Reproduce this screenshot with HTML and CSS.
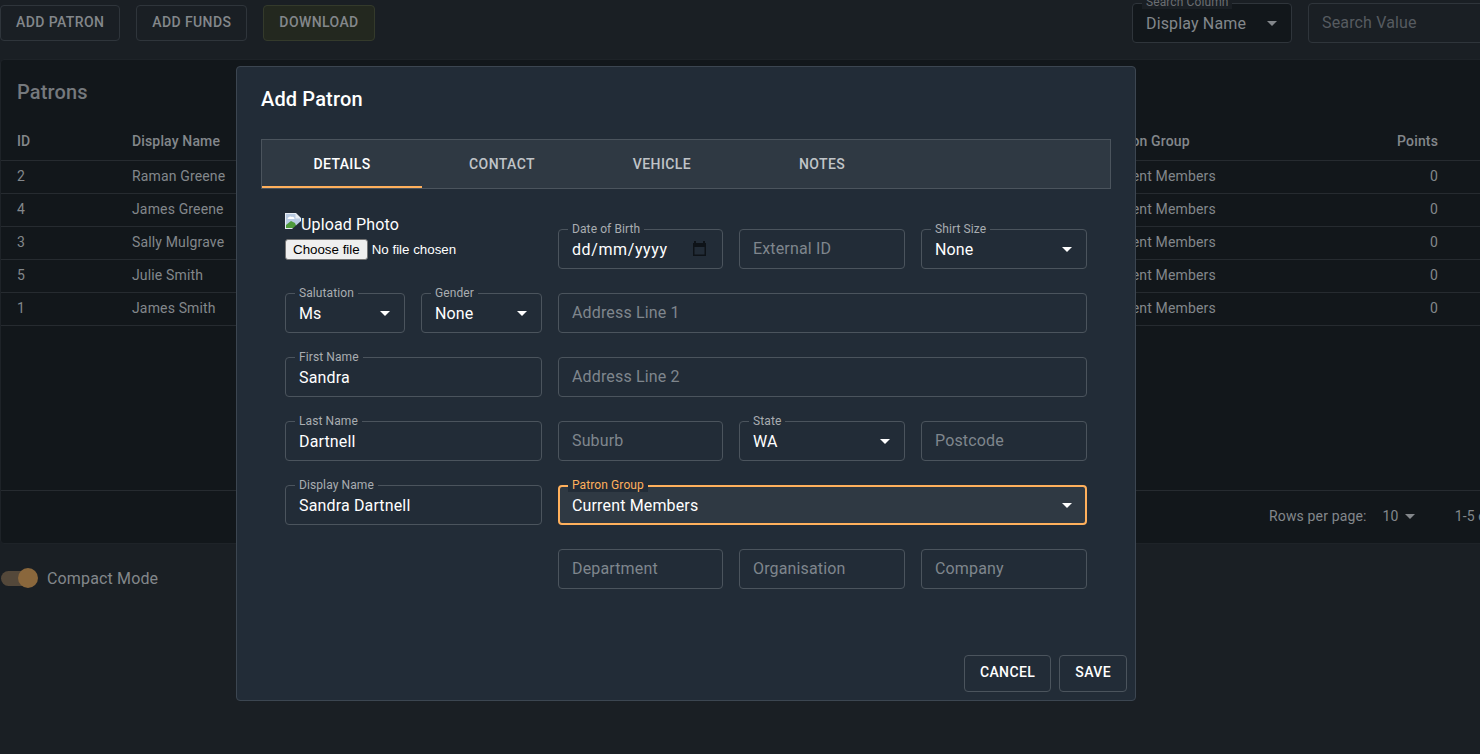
FILE: index.html
```html
<!DOCTYPE html>
<html lang="en">
<head>
<meta charset="utf-8">
<title>Patrons</title>
<link rel="stylesheet" href="styles.css">
</head>
<body>
<div class="page">
  <div class="toolbar">
    <button class="tbtn">Add Patron</button>
    <button class="tbtn">Add Funds</button>
    <button class="tbtn tbtn-green">Download</button>
    <div class="search">
      <div class="sfield sfield-col">
        <span class="slabel">Search Column</span>
        <span>Display Name</span>
        <svg class="caret caret-dim" viewBox="0 0 24 24"><path d="M7 10l5 5 5-5z"/></svg>
      </div>
      <div class="sfield sfield-val"><span class="splace">Search Value</span></div>
    </div>
  </div>

  <section class="panel">
    <h2 class="panel-title">Patrons</h2>
    <div class="trow thead"><span>ID</span><span>Display Name</span><span>Patron Group</span><span class="num">Points</span></div>
    <div class="trow"><span>2</span><span>Raman Greene</span><span>Current Members</span><span class="num">0</span></div>
    <div class="trow"><span>4</span><span>James Greene</span><span>Current Members</span><span class="num">0</span></div>
    <div class="trow"><span>3</span><span>Sally Mulgrave</span><span>Current Members</span><span class="num">0</span></div>
    <div class="trow"><span>5</span><span>Julie Smith</span><span>Current Members</span><span class="num">0</span></div>
    <div class="trow"><span>1</span><span>James Smith</span><span>Current Members</span><span class="num">0</span></div>
    <div class="tspace"></div>
    <div class="tfoot">
      <span>Rows per page:</span>
      <span class="rpp">10</span>
      <svg class="caret-small" viewBox="0 0 24 24"><path d="M7 10l5 5 5-5z"/></svg>
      <span class="range">1-5 of 5</span>
    </div>
  </section>

  <div class="compact">
    <span class="switch"><span class="thumb"></span></span>
    <span>Compact Mode</span>
  </div>
</div>

<div class="modal">
  <h2 class="modal-title">Add Patron</h2>
  <div class="tabs">
    <div class="tab tab-active">Details</div>
    <div class="tab">Contact</div>
    <div class="tab">Vehicle</div>
    <div class="tab">Notes</div>
  </div>

  <div class="form">
    <div class="upload">
      <div class="photo">
        <svg class="broken" viewBox="0 0 16 16">
          <path d="M0 0h11l5 5v11H0z" fill="#e8edf3"/>
          <path d="M1 1h9.500v4.500H15V15H1z" fill="#b9cbe2"/>
          <path d="M2.500 6c.5-2 2.500-3 4-2 1.500-.5 3 .5 3 2z" fill="#fff"/>
          <path d="M1 15v-3l5-4 4 2 2 5z" fill="#4e9a3b"/>
          <path d="M7 16l9-8v8z" fill="#222c37"/>
        </svg><span>Upload Photo</span>
      </div>
      <div class="file"><button class="file-btn">Choose file</button><span>No file chosen</span></div>
    </div>
    <div class="cols-3">
      <div class="field"><span class="flabel">Date of Birth</span><span class="date">dd/mm/yyyy</span>
        <svg class="cal" viewBox="0 0 13 15"><path fill-rule="evenodd" d="M1 0h2v2h7V0h2v2h1v13H0V2h1zM1.500 6v7.500h10V6z" fill="#0e1318"/></svg>
      </div>
      <div class="field"><input class="finput" placeholder="External ID"></div>
      <div class="field"><span class="flabel">Shirt Size</span><span class="fval">None</span><svg class="caret" viewBox="0 0 24 24"><path d="M7 10l5 5 5-5z"/></svg></div>
    </div>

    <div class="cols-2">
      <div class="field"><span class="flabel">Salutation</span><span class="fval">Ms</span><svg class="caret" viewBox="0 0 24 24"><path d="M7 10l5 5 5-5z"/></svg></div>
      <div class="field"><span class="flabel">Gender</span><span class="fval">None</span><svg class="caret" viewBox="0 0 24 24"><path d="M7 10l5 5 5-5z"/></svg></div>
    </div>
    <div class="field"><input class="finput" placeholder="Address Line 1"></div>

    <div class="field"><span class="flabel">First Name</span><input class="finput fill" value="Sandra"></div>
    <div class="field"><input class="finput" placeholder="Address Line 2"></div>

    <div class="field"><span class="flabel">Last Name</span><input class="finput fill" value="Dartnell"></div>
    <div class="cols-3">
      <div class="field"><input class="finput" placeholder="Suburb"></div>
      <div class="field"><span class="flabel">State</span><span class="fval">WA</span><svg class="caret" viewBox="0 0 24 24"><path d="M7 10l5 5 5-5z"/></svg></div>
      <div class="field"><input class="finput" placeholder="Postcode"></div>
    </div>

    <div class="field"><span class="flabel">Display Name</span><input class="finput fill" value="Sandra Dartnell"></div>
    <div class="field field-focus"><span class="flabel">Patron Group</span><span class="fval">Current Members</span><svg class="caret" viewBox="0 0 24 24"><path d="M7 10l5 5 5-5z"/></svg></div>

    <div></div>
    <div class="cols-3">
      <div class="field"><input class="finput" placeholder="Department"></div>
      <div class="field"><input class="finput" placeholder="Organisation"></div>
      <div class="field"><input class="finput" placeholder="Company"></div>
    </div>
  </div>

  <div class="actions">
    <button class="mbtn">Cancel</button>
    <button class="mbtn">Save</button>
  </div>
</div>
</body>
</html>
```
FILE: styles.css
```css
* { box-sizing: border-box; }
html, body { margin: 0; height: 100%; overflow: hidden; }
body { background: #1a1f24; font-family: Roboto, "Liberation Sans", sans-serif; color: #83878b; position: relative; letter-spacing: .15px; }

.page { width: 1620px; }

.toolbar { display: flex; align-items: flex-start; gap: 16px; padding: 5px 12px 0 0; height: 59px; }
.tbtn { height: 36px; padding: 0 15px 2px; background: transparent; border: 1px solid #2f353b; border-radius: 4px; color: #83878b; font: 500 14px/1 Roboto, sans-serif; letter-spacing: .4px; text-transform: uppercase; white-space: nowrap; }
.tbtn-green { background: #23281f; border-color: #343a2b; }

.search { display: flex; gap: 16px; margin-left: auto; margin-top: -2px; }
.sfield { position: relative; height: 40px; border: 1px solid #2f353b; border-radius: 4px; display: flex; align-items: center; padding: 0 13px; font-size: 16px; }
.sfield-col { width: 160px; background: #12171b; }
.sfield-val { width: 300px; }
.splace { color: #565b60; margin-top: -2px; }
.slabel { position: absolute; left: 9px; top: -9px; font-size: 12px; line-height: 14px; padding: 0 4px; background: #1a1f24; color: #6a6e72; letter-spacing: .1px; }

.caret { position: absolute; right: 7px; top: 50%; width: 24px; height: 24px; margin-top: -12px; fill: #fff; }
.caret-dim { fill: #83878b; }

.panel { background: #12171b; border: 1px solid #1e2328; border-radius: 4px; height: 485px; display: flex; flex-direction: column; }
.panel-title { margin: 0; padding: 20px 16px 0; height: 65px; font: 500 20px/24px Roboto, sans-serif; color: #75797d; }
.trow { display: grid; grid-template-columns: 115px 973px 202px 131px; padding: 0 0 2px 16px; height: 33px; border-bottom: 1px solid #262b30; align-items: center; font-size: 14px; }
.thead { height: 36px; padding-bottom: 4px; font-weight: 500; }
.num { text-align: right; }
.tspace { flex: 1; border-bottom: 1px solid #262b30; }
.tfoot { height: 52px; display: flex; align-items: center; padding: 0 0 2px 1268px; font-size: 14px; }
.rpp { margin-left: 16px; }
.caret-small { width: 24px; height: 24px; margin-left: -1px; fill: #83878b; }
.range { margin-left: 33px; }

.compact { display: flex; align-items: center; gap: 9px; margin-top: 24px; padding-left: 1px; font-size: 16px; height: 20px; }
.switch { position: relative; width: 34px; height: 15px; margin-right: 3px; border-radius: 8px; background: #54483a; display: block; }
.thumb { position: absolute; right: -3px; top: -3px; width: 20px; height: 20px; border-radius: 50%; background: #8a673c; }

.modal { position: absolute; left: 236px; top: 66px; width: 900px; height: 635px; background: #222c37; border: 1px solid #3c4651; border-radius: 4px; padding: 20px 24px 8px; display: flex; flex-direction: column; color: #fff; }
.modal-title { margin: 0; font: 500 20px/24px Roboto, sans-serif; color: #fff; letter-spacing: .15px; }

.tabs { display: flex; margin-top: 28px; height: 50px; background: #2f3943; border: 1px solid #4b545d; }
.tab { width: 160px; display: flex; align-items: center; justify-content: center; font-size: 14px; font-weight: 500; text-transform: uppercase; letter-spacing: .4px; color: #c0c4c8; padding-bottom: 1px; }
.tab-active { color: #fff; border-bottom: 2px solid #ffb05c; padding: 1px 0 0; }

.form { display: grid; grid-template-columns: 257px 529px; grid-auto-rows: 40px; gap: 24px 16px; margin: 40px 24px 0; }
.cols-3 { display: grid; grid-template-columns: 165px 166px 166px; gap: 16px; }
.cols-2 { display: grid; grid-template-columns: 120px 121px; gap: 16px; }

.upload { margin-top: -16px; height: 48px; }
.photo { display: flex; font-size: 16px; height: 23px; align-items: flex-start; color: #fff; line-height: 23px; }
.broken { width: 16px; height: 16px; flex: none; }
.file { display: flex; align-items: center; margin-top: 3px; color: #fff; font: 13.333px "Liberation Sans", Arial, sans-serif; letter-spacing: 0; }
.file-btn { height: 21px; padding: 0 7px; margin-right: 4px; background: #efefef; border: 1px solid #767676; border-radius: 3px; color: #000; font: 13.333px "Liberation Sans", Arial, sans-serif; }

.field { position: relative; height: 40px; border: 1px solid #4b545d; border-radius: 4px; display: flex; align-items: center; padding: 0 13px; font-size: 16px; color: #fff; }
.flabel { position: absolute; left: 9px; top: -8px; padding: 0 4px; background: #222c37; font-size: 12px; line-height: 14px; color: #a9adb1; letter-spacing: .1px; }
.fval { margin-top: 1px; }
.finput { width: 100%; background: transparent; border: 0; outline: 0; padding: 0; color: #fff; font: 400 16px/20px Roboto, sans-serif; letter-spacing: .15px; margin-top: -1px; }
.finput.fill { margin-top: 1px; }
.finput::placeholder { color: #7f868d; opacity: 1; }
.date { letter-spacing: .6px; margin-top: 1px; }
.cal { position: absolute; right: 16px; top: 11px; width: 13px; height: 15px; }

.field-focus { border: 2px solid #ffb05c; background: #2f3943; padding: 0 12px; }
.field-focus .flabel { left: 8px; top: -9px; color: #ffb05c; }
.field-focus .caret { right: 6px; }

.actions { margin-top: auto; display: flex; justify-content: flex-end; gap: 8px; margin-right: -16px; }
.mbtn { height: 37px; padding: 0 15px 3px; background: transparent; border: 1px solid #4b545d; border-radius: 4px; color: #fff; font: 500 14px/1 Roboto, sans-serif; letter-spacing: .4px; text-transform: uppercase; }
```
